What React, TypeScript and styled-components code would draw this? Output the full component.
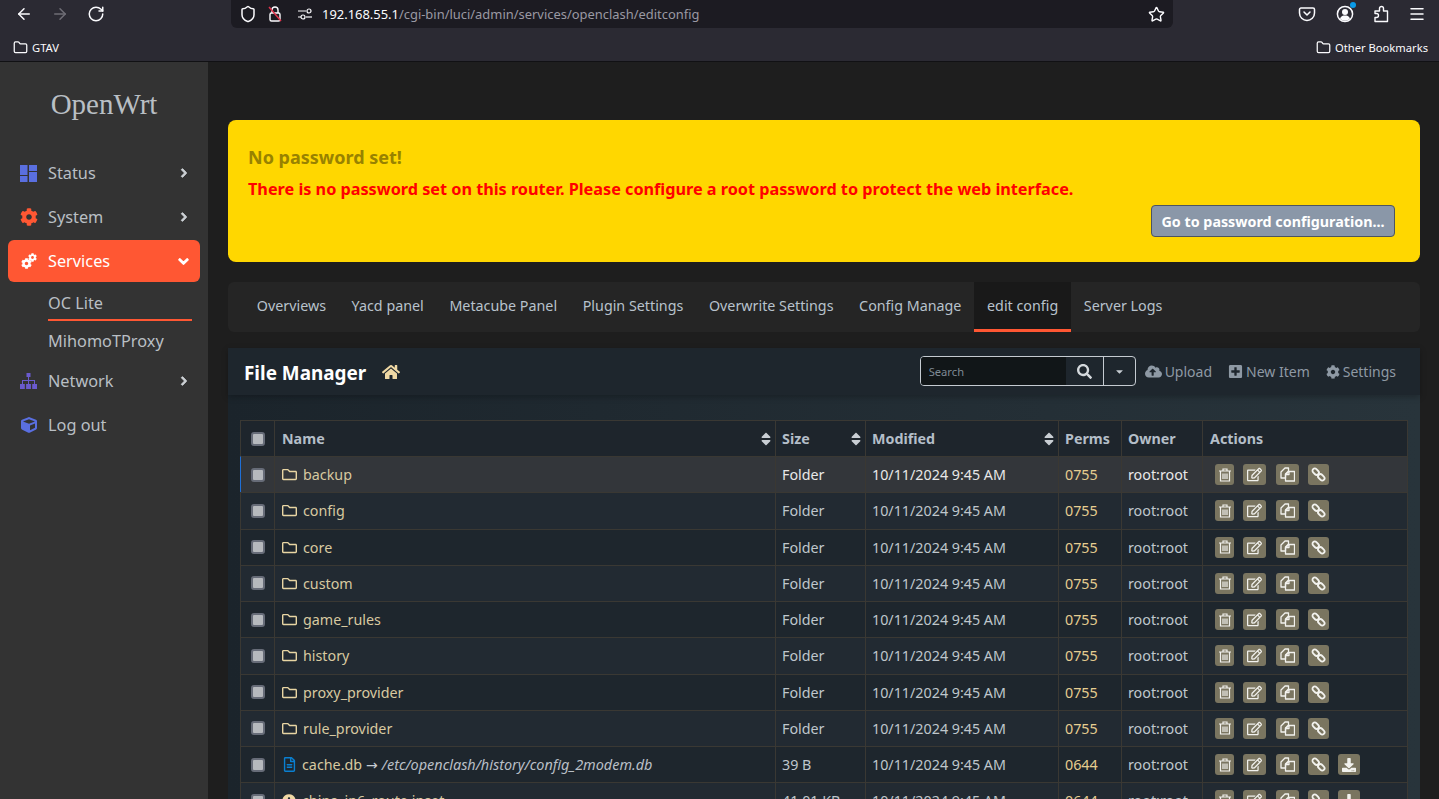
import React from "react";
import styled, { createGlobalStyle } from "styled-components";
import { ArrowLeft, ArrowRight, RotateCw, Shield, Star, Menu, Folder } from "lucide-react";
import {
  FaChevronRight, FaChevronDown, FaCog, FaCube, FaCloudUploadAlt, FaPlusSquare,
  FaSearch, FaCaretDown, FaHome, FaSort, FaRegFolder, FaRegFileAlt, FaInfoCircle, FaRegEdit, FaDownload,
} from "react-icons/fa";

const UI = `"Noto Sans", "Open Sans", sans-serif`;

const Global = createGlobalStyle`
  html, body { margin: 0; padding: 0; height: 100%; overflow: hidden; background: #1e1e1e; }
  #root { height: 100%; }
  * { box-sizing: border-box; }
`;

const Page = styled.div`
  height: 799px; display: flex; flex-direction: column; overflow: hidden; font-family: ${UI};
`;
const Toolbar = styled.div`
  flex: none; height: 34px; background: #2b2a33; display: grid; grid-template-columns: 231px 942px 1fr; color: #fbfbfe;
`;
const NavGroup = styled.div`
  display: flex; align-items: center; gap: 18px; padding: 0 0 6px 15px;
`;
const DimIcon = styled.span`
  display: flex; color: #6f6e76;
`;
const UrlBar = styled.div`
  height: 28px; background: #1c1b22; border-radius: 0 0 6px 6px; display: flex; align-items: center; padding: 0 8px 0 8px;
`;
const UrlText = styled.div`
  margin-left: 9px; flex: 1; font-size: 12.93px; color: #9a99a3; white-space: nowrap;
  b { font-weight: 400; color: #fbfbfe; }
`;
const UrlIcon = styled.span<{ $gap: number }>`
  display: flex; margin-right: ${(p) => p.$gap}px;
`;
const RightIcons = styled.div`
  display: flex; align-items: center; gap: 18px; padding: 0 0 6px 125px;
`;
const Badged = styled.span`
  position: relative; display: flex; margin-left: 2px;
  &::after { content: ""; position: absolute; top: -3px; right: -2px; width: 6px; height: 6px; border-radius: 50%; background: #0a9be8; }
`;
const Bookmarks = styled.div`
  flex: none; height: 28px; background: #2b2a33; border-bottom: 1px solid #111114; display: flex; align-items: center;
  justify-content: space-between; padding: 0 11px 0 13px; color: #fbfbfe; font-size: 11.2px;
`;
const Bookmark = styled.div`
  display: flex; align-items: center; gap: 4px;
`;
const Body = styled.div`
  flex: 1; min-height: 0; display: flex;
`;
const Sidebar = styled.aside`
  flex: none; width: 208px; background: #333333; color: #b9bfc4;
`;
const Logo = styled.div`
  height: 89px; padding-bottom: 5px; display: flex; align-items: center; justify-content: center;
  font-family: "Liberation Serif", serif; font-size: 29px; color: #b9bfc4;
`;
const NavSlot = styled.div`
  height: 44px; padding: 1px 8px;
`;
const NavItem = styled.div<{ $active?: boolean }>`
  height: 42px; border-radius: 6px; display: flex; align-items: center; padding: 0 11px 0 12px; font-size: 16.3px;
  background: ${(p) => (p.$active ? "#ff5733" : "transparent")};
  color: ${(p) => (p.$active ? "#ffffff" : "#b9bfc4")};
`;
const NavIcon = styled.span<{ $color?: string; $inset?: number }>`
  width: 28px; display: flex; color: ${(p) => p.$color || "inherit"}; padding-left: ${(p) => p.$inset ?? 0}px;
`;
const NavLabel = styled.span`
  flex: 1;
`;
const Chevron = styled.span`
  display: flex; color: #d0d4d8;
  svg { stroke: currentColor; stroke-width: 50px; }
`;
const ChevronDown = styled(Chevron)`
  color: #fff;
`;
const SubMenu = styled.div`
  height: 76px; padding: 0 16px 0 48px;
`;
const SubItem = styled.div<{ $active?: boolean }>`
  height: 38px; display: flex; align-items: center; font-size: 16.3px; padding-top: 3px;
  border-bottom: 2px solid ${(p) => (p.$active ? "#ff5733" : "transparent")};
`;
const Main = styled.main`
  flex: 1; min-width: 0; padding: 58px 19px 0 20px; overflow: hidden;
`;
const Alert = styled.section`
  height: 142px; background: #ffd700; border-radius: 8px; padding: 25px 25px 0 20px; display: flex; flex-direction: column;
`;
const AlertTitle = styled.div`
  font-size: 18px; font-weight: 700; line-height: 24px; color: #988200;
`;
const AlertText = styled.div`
  margin-top: 8px; font-size: 16.23px; font-weight: 700; line-height: 24px; color: #ff0000; white-space: nowrap;
`;
const AlertButton = styled.button`
  align-self: flex-end; margin-top: 4px; width: 244px; height: 32px; background: #8a97a8; border: 1px solid #4d5560; border-radius: 4px;
  color: #fff; font-family: ${UI}; font-size: 14.3px; font-weight: 700; padding: 0; white-space: nowrap;
`;
const Tabs = styled.nav`
  margin-top: 20px; height: 50px; background: #252525; border-radius: 6px; padding-left: 16px; display: flex;
`;
const Tab = styled.div<{ $active?: boolean }>`
  padding: 0 12.8px; display: flex; align-items: center; font-size: 14.3px; color: #b8c2cc; white-space: nowrap;
  background: ${(p) => (p.$active ? "#191919" : "transparent")};
  border-bottom: 3px solid ${(p) => (p.$active ? "#ff5733" : "transparent")};
`;
const Panel = styled.section`
  margin-top: 16px; background: linear-gradient(90deg, #1b242b, #28343b); border-radius: 4px 4px 0 0; height: 460px;
`;
const PanelHeader = styled.header`
  height: 47px; background: #1e262d; display: flex; align-items: center; padding: 0 24px 1px 16px; box-shadow: 0 2px 6px rgba(0,0,0,.25);
`;
const PanelTitle = styled.h2`
  margin: 3px 0 0; font-size: 18.9px; font-weight: 700; color: #fff; white-space: nowrap;
`;
const HomeLink = styled.span`
  display: flex; margin: 1px 0 0 16px; color: #efd8a4;
`;
const HeaderTools = styled.div`
  margin-left: auto; display: flex; align-items: center;
`;
const SearchBox = styled.div`
  width: 216px; height: 30px; border: 1px solid #c5cbd1; border-radius: 4px; display: flex; overflow: hidden; margin-right: 9px;
`;
const SearchInput = styled.div`
  width: 145px; background: #111618; color: #7f8a94; font-size: 11.2px; display: flex; align-items: center; padding-left: 8px;
`;
const SearchButton = styled.div`
  width: 38px; display: flex; align-items: center; justify-content: center; color: #d4d9dd; border-right: 1px solid #c5cbd1;
`;
const CaretButton = styled.div`
  flex: 1; display: flex; align-items: center; justify-content: center; color: #c5cbd1;
`;
const ToolLink = styled.div<{ $gap?: number }>`
  display: flex; align-items: center; gap: 3px; color: #8e99a4; font-size: 14px; white-space: nowrap; margin-left: ${(p) => p.$gap ?? 0}px; padding-top: 1px;
`;
const PanelBody = styled.div`
  padding: 25px 12px 0;
`;
const COLS = "33px 501px 90px 193px 63px 81px 1fr";
const HeadRow = styled.div`
  display: grid; grid-template-columns: ${COLS}; height: 36px; background: #1e252c; border: 1px solid #3a3833; border-bottom: 0;
`;
const HeadCell = styled.div`
  display: flex; align-items: center; justify-content: space-between; padding: 0 1px 0 6px; font-size: 14.3px; font-weight: 700; color: #b4bec8;
  border-left: 1px solid #3a3833; white-space: nowrap;
  &:first-child { border-left: 0; justify-content: center; padding: 0; }
  &:nth-child(2), &:nth-child(7) { padding-left: 7px; }
`;
const SortIcon = styled.span`
  display: flex; color: #c9ced4;
`;
const Row = styled.div<{ $hover?: boolean; $alt?: boolean }>`
  display: grid; grid-template-columns: ${COLS}; height: 36.25px;
  background: ${(p) => (p.$hover ? "#33363a" : p.$alt ? "#222a32" : "#1e262d")};
  border-top: 1px solid #3a3833; border-right: 1px solid #3a3833;
  border-left: 1px solid ${(p) => (p.$hover ? "#1f6fd6" : "#3a3833")};
  color: ${(p) => (p.$hover ? "#e8e8e8" : "#bfc6cc")};
`;
const Cell = styled.div`
  display: flex; align-items: center; padding: 0 5px 0 6px; font-size: 14.3px; border-left: 1px solid #3a3833; white-space: nowrap; overflow: hidden;
  &:first-child { border-left: 0; justify-content: center; padding: 0; }
  &:nth-child(2) { padding-left: 7px; }
`;
const PermCell = styled(Cell)`
  color: #e6cd90;
`;
const Check = styled.span`
  width: 14px; height: 14px; border: 2px solid #676c78; border-radius: 3px; background: #b6b9bd; display: block;
`;
const NameIcon = styled.span<{ $color: string; $width: number }>`
  display: flex; width: ${(p) => p.$width}px; flex: none; color: ${(p) => p.$color};
`;
const NameText = styled.span`
  color: #d8c9a0;
`;
const LinkArrow = styled.span`
  margin: 0 4px; font-family: "DejaVu Sans", sans-serif; font-size: 14px; color: #c6ccd2;
`;
const LinkTarget = styled.span`
  color: #b9bfc6; font-style: italic; font-size: 14.45px;
`;
const Actions = styled(Cell)`
  padding-left: 12px; gap: 9.3px; overflow: visible;
`;
const ActionBtn = styled.span<{ $w: number }>`
  width: ${(p) => p.$w}px; height: 21px; flex: none; background: #7a7560; border-radius: 3px; display: flex; align-items: center; justify-content: center; color: #f2f2ee;
`;

const LockSlash = () => (
  <svg width="18" height="18" viewBox="0 0 18 18" fill="none" stroke="#fbfbfe" strokeWidth="1.4">
    <rect x="4" y="8" width="10" height="8" rx="1.5" />
    <path d="M6 8V5a3 3 0 0 1 6 0v3" />
    <path d="M3 2l12 14" stroke="#e0324b" strokeWidth="1.5" />
  </svg>
);
const Sliders = () => (
  <svg width="16" height="16" viewBox="0 0 16 16" fill="none" stroke="#fbfbfe" strokeWidth="1.2">
    <path d="M1 5h8M1 11h3" />
    <circle cx="12" cy="5" r="2" />
    <circle cx="6" cy="11" r="2" />
    <path d="M9 11h6" />
  </svg>
);
const Pocket = () => (
  <svg width="18" height="18" viewBox="0 0 18 18" fill="none" stroke="#fbfbfe" strokeWidth="1.5">
    <path d="M3 3h12a1.5 1.5 0 0 1 1.5 1.5V8a7.5 7.5 0 0 1-15 0V4.500A1.500 1.500 0 0 1 3 3z" />
    <path d="M6 7l3 3 3-3" strokeLinecap="round" strokeLinejoin="round" />
  </svg>
);
const Account = () => (
  <svg width="18" height="18" viewBox="0 0 18 18" fill="none">
    <circle cx="9" cy="9" r="7.6" stroke="#fbfbfe" strokeWidth="1.5" />
    <circle cx="9" cy="7" r="3" fill="#fbfbfe" />
    <path d="M4 13.500c1-2.500 3-3 5-3s4 .5 5 3a6.500 6.500 0 0 1-10 0z" fill="#fbfbfe" />
  </svg>
);
const Extension = () => (
  <svg width="18" height="18" viewBox="0 0 18 18" fill="none" stroke="#fbfbfe" strokeWidth="1.4" strokeLinejoin="round">
    <path d="M3 16.500V12.500h1.500a2 2 0 0 0 0-4H3V6h4.500V3.500a2 2 0 0 1 4 0V6h4v10.500z" />
  </svg>
);
const Dashboard = () => (
  <svg width="17" height="17" viewBox="0 0 17 17" fill="#5a6fe0">
    <rect x="0" y="0" width="7.500" height="10" />
    <rect x="0" y="11" width="7.500" height="6" />
    <rect x="9" y="0" width="8" height="6" />
    <rect x="9" y="7" width="8" height="10" />
  </svg>
);
const TwoGears = () => (
  <svg width="16" height="16" viewBox="0 0 16 16" fill="currentColor">
    <FaCog x={0} y={5} size={11} />
    <FaCog x={7} y={0} size={9} />
  </svg>
);
const NetworkTree = () => (
  <svg width="17" height="16" viewBox="0 0 17 16" fill="currentColor">
    <rect x="6.500" y="0" width="4" height="4" />
    <path d="M8 4h1v3h6v4h-1V8H9v3H8V8H3v3H2V7h6z" />
    <rect x="0" y="11" width="4.800" height="5" />
    <rect x="6.100" y="11" width="4.800" height="5" />
    <rect x="12.200" y="11" width="4.800" height="5" />
  </svg>
);
const Trash = () => (
  <svg width="12" height="14" viewBox="0 0 12 14" fill="none" stroke="currentColor" strokeWidth="1.200">
    <path d="M0 3h12M4 3V1h4v2" />
    <path d="M1.500 3v10h9V3" />
    <path d="M4 5.500v5.500M6 5.500v5.500M8 5.500v5.500" />
  </svg>
);
const CopyDocs = () => (
  <svg width="15" height="15" viewBox="0 0 15 15" fill="none" stroke="currentColor" strokeWidth="1.300" strokeLinejoin="round">
    <path d="M5 1h3.500v3L5.500 7v4H1V5z" />
    <path d="M9 4.500h5.500V14H5.500V7.500z" />
    <path d="M9 4.500v3H5.500" />
  </svg>
);
const Chain = () => (
  <svg width="15" height="15" viewBox="0 0 15 15" fill="none" stroke="currentColor" strokeWidth="1.800">
    <rect x="1.100" y="2.400" width="7.200" height="4.600" rx="2.300" transform="rotate(45 4.700 4.700)" />
    <rect x="6.700" y="8" width="7.200" height="4.600" rx="2.300" transform="rotate(45 10.300 10.300)" />
  </svg>
);

type Entry = {
  name: string; size: string; perm: string; kind: "folder" | "link" | "info"; target?: string;
};
const entries: Entry[] = [
  { name: "backup", size: "Folder", perm: "0755", kind: "folder" },
  { name: "config", size: "Folder", perm: "0755", kind: "folder" },
  { name: "core", size: "Folder", perm: "0755", kind: "folder" },
  { name: "custom", size: "Folder", perm: "0755", kind: "folder" },
  { name: "game_rules", size: "Folder", perm: "0755", kind: "folder" },
  { name: "history", size: "Folder", perm: "0755", kind: "folder" },
  { name: "proxy_provider", size: "Folder", perm: "0755", kind: "folder" },
  { name: "rule_provider", size: "Folder", perm: "0755", kind: "folder" },
  { name: "cache.db", size: "39 B", perm: "0644", kind: "link", target: "/etc/openclash/history/config_2modem.db" },
  { name: "china_ip6_route.ipset", size: "41.01 KB", perm: "0644", kind: "info" },
];
const tabs = ["Overviews", "Yacd panel", "Metacube Panel", "Plugin Settings", "Overwrite Settings", "Config Manage", "edit config", "Server Logs"];

const EntryIcon = ({ kind }: { kind: Entry["kind"] }) => {
  if (kind === "folder") return <NameIcon $color="#e8d5a3" $width={21}><FaRegFolder size={15} /></NameIcon>;
  if (kind === "link") return <NameIcon $color="#0a7fd0" $width={20}><FaRegFileAlt size={15} /></NameIcon>;
  return <NameIcon $color="#efd8a4" $width={20}><FaInfoCircle size={14} /></NameIcon>;
};

export default function App() {
  return (
    <Page>
      <Global />
      <Toolbar>
        <NavGroup>
          <ArrowLeft size={18} />
          <DimIcon><ArrowRight size={18} /></DimIcon>
          <RotateCw size={18} />
        </NavGroup>
        <UrlBar>
          <UrlIcon $gap={9}><Shield size={18} /></UrlIcon>
          <UrlIcon $gap={13}><LockSlash /></UrlIcon>
          <Sliders />
          <UrlText><b>192.168.55.1</b>/cgi-bin/luci/admin/services/openclash/editconfig</UrlText>
          <Star size={17} />
        </UrlBar>
        <RightIcons>
          <Pocket />
          <Badged><Account /></Badged>
          <Extension />
          <Menu size={18} />
        </RightIcons>
      </Toolbar>
      <Bookmarks>
        <Bookmark><Folder size={15} />GTAV</Bookmark>
        <Bookmark><Folder size={15} />Other Bookmarks</Bookmark>
      </Bookmarks>
      <Body>
        <Sidebar>
          <Logo>OpenWrt</Logo>
          <NavSlot><NavItem><NavIcon><Dashboard /></NavIcon><NavLabel>Status</NavLabel><Chevron><FaChevronRight size={10} /></Chevron></NavItem></NavSlot>
          <NavSlot><NavItem><NavIcon $color="#ff5733" $inset={0}><FaCog size={18} /></NavIcon><NavLabel>System</NavLabel><Chevron><FaChevronRight size={10} /></Chevron></NavItem></NavSlot>
          <NavSlot><NavItem $active><NavIcon $inset={1}><TwoGears /></NavIcon><NavLabel>Services</NavLabel><ChevronDown><FaChevronDown size={11} /></ChevronDown></NavItem></NavSlot>
          <SubMenu>
            <SubItem $active>OC Lite</SubItem>
            <SubItem>MihomoTProxy</SubItem>
          </SubMenu>
          <NavSlot><NavItem><NavIcon $color="#6a5acd"><NetworkTree /></NavIcon><NavLabel>Network</NavLabel><Chevron><FaChevronRight size={10} /></Chevron></NavItem></NavSlot>
          <NavSlot><NavItem><NavIcon $color="#5a6fe0" $inset={1}><FaCube size={16} /></NavIcon><NavLabel>Log out</NavLabel></NavItem></NavSlot>
        </Sidebar>
        <Main>
          <Alert>
            <AlertTitle>No password set!</AlertTitle>
            <AlertText>There is no password set on this router. Please configure a root password to protect the web interface.</AlertText>
            <AlertButton>Go to password configuration...</AlertButton>
          </Alert>
          <Tabs>
            {tabs.map((t) => <Tab key={t} $active={t === "edit config"}>{t}</Tab>)}
          </Tabs>
          <Panel>
            <PanelHeader>
              <PanelTitle>File Manager</PanelTitle>
              <HomeLink><FaHome size={18} /></HomeLink>
              <HeaderTools>
                <SearchBox>
                  <SearchInput>Search</SearchInput>
                  <SearchButton><FaSearch size={15} /></SearchButton>
                  <CaretButton><FaCaretDown size={11} /></CaretButton>
                </SearchBox>
                <ToolLink><FaCloudUploadAlt size={17} />Upload</ToolLink>
                <ToolLink $gap={16}><FaPlusSquare size={15} />New Item</ToolLink>
                <ToolLink $gap={16}><FaCog size={14} />Settings</ToolLink>
              </HeaderTools>
            </PanelHeader>
            <PanelBody>
              <HeadRow>
                <HeadCell><Check /></HeadCell>
                <HeadCell>Name<SortIcon><FaSort size={16} /></SortIcon></HeadCell>
                <HeadCell>Size<SortIcon><FaSort size={16} /></SortIcon></HeadCell>
                <HeadCell>Modified<SortIcon><FaSort size={16} /></SortIcon></HeadCell>
                <HeadCell>Perms</HeadCell>
                <HeadCell>Owner</HeadCell>
                <HeadCell>Actions</HeadCell>
              </HeadRow>
              {entries.map((e, i) => (
                <Row key={e.name} $hover={i === 0} $alt={i % 2 === 1}>
                  <Cell><Check /></Cell>
                  <Cell>
                    <EntryIcon kind={e.kind} />
                    <NameText>{e.name}</NameText>
                    {e.target && <><LinkArrow>→</LinkArrow><LinkTarget>{e.target}</LinkTarget></>}
                  </Cell>
                  <Cell>{e.size}</Cell>
                  <Cell>10/11/2024 9:45 AM</Cell>
                  <PermCell>{e.perm}</PermCell>
                  <Cell>root:root</Cell>
                  <Actions>
                    <ActionBtn $w={19}><Trash /></ActionBtn>
                    <ActionBtn $w={23}><FaRegEdit size={15} /></ActionBtn>
                    <ActionBtn $w={23}><CopyDocs /></ActionBtn>
                    <ActionBtn $w={21}><Chain /></ActionBtn>
                    {e.kind !== "folder" && <ActionBtn $w={22}><FaDownload size={14} /></ActionBtn>}
                  </Actions>
                </Row>
              ))}
            </PanelBody>
          </Panel>
        </Main>
      </Body>
    </Page>
  );
}
